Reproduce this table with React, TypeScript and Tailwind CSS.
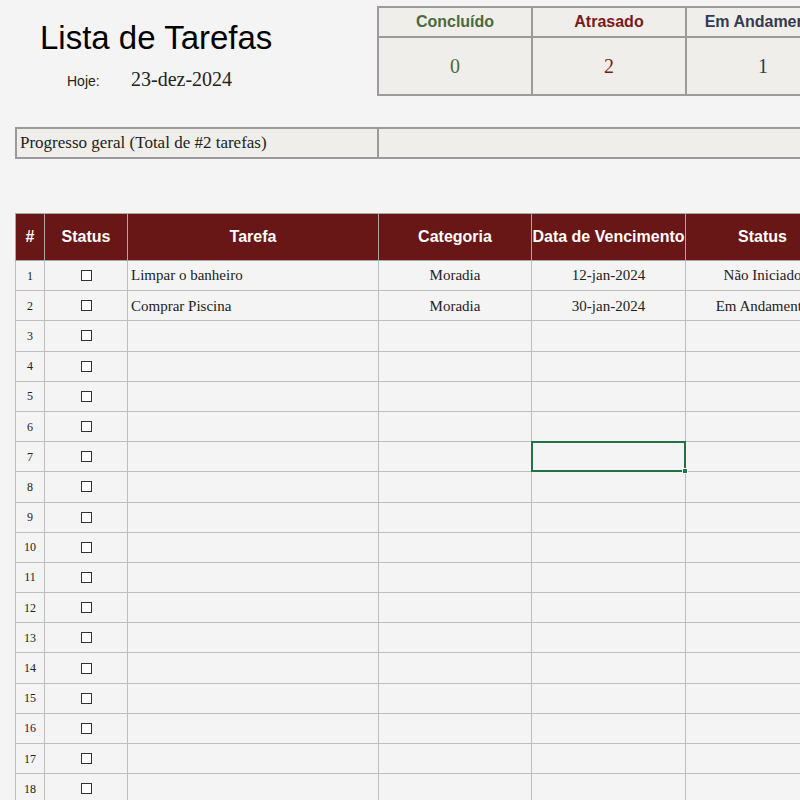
const rows = [
  { n: 1, tarefa: 'Limpar o banheiro', cat: 'Moradia', data: '12-jan-2024', status: 'Não Iniciado' },
  { n: 2, tarefa: 'Comprar Piscina', cat: 'Moradia', data: '30-jan-2024', status: 'Em Andamento' },
  ...Array.from({ length: 16 }, (_, i) => ({ n: i + 3, tarefa: '', cat: '', data: '', status: '' })),
];

const serif = "font-['Liberation_Serif',Georgia,serif]";
const sans = "font-['Liberation_Sans',Arial,sans-serif]";

function Checkbox() {
  return <span className="inline-block w-[11px] h-[11px] border border-[#333] bg-white mt-[3px]" />;
}

export default function App() {
  return (
    <div className="w-[800px] h-[800px] overflow-hidden bg-[#f4f4f4] text-[#222]">
      {/* Top: title + summary */}
      <div className="flex pt-[6px]">
        <div className="w-[377px] shrink-0">
          <h1 className={`${sans} text-[33px] leading-none ml-[40px] mt-[15px] text-black`}>Lista de Tarefas</h1>
          <div className="flex items-baseline ml-[67px] mt-[10px]">
            <span className={`${sans} text-[14px] w-[64px]`}>Hoje:</span>
            <span className={`${serif} text-[20px]`}>23-dez-2024</span>
          </div>
        </div>
        <table className="border-collapse shrink-0 table-fixed w-[462px] bg-[#efeeea]">
          <tbody>
            <tr className="h-[30px]">
              <td className={`${sans} w-[154px] border-2 border-[#9a9a9a] text-center font-bold text-[16px] text-[#4b6a3c]`}>Concluído</td>
              <td className={`${sans} w-[154px] border-2 border-[#9a9a9a] text-center font-bold text-[16px] text-[#7a1b1b]`}>Atrasado</td>
              <td className={`${sans} w-[154px] border-2 border-[#9a9a9a] text-center font-bold text-[16px] text-[#353a52] whitespace-nowrap overflow-hidden`}>Em Andamento</td>
            </tr>
            <tr className="h-[58px]">
              <td className={`${serif} border-2 border-[#9a9a9a] text-center text-[20px] text-[#4b6a3c]`}>0</td>
              <td className={`${serif} border-2 border-[#9a9a9a] text-center text-[20px] text-[#7a1b1b]`}>2</td>
              <td className={`${serif} border-2 border-[#9a9a9a] text-center text-[20px] text-[#353a52]`}>1</td>
            </tr>
          </tbody>
        </table>
      </div>

      {/* Progress */}
      <table className="border-collapse table-fixed ml-[15px] mt-[31px] w-[830px] bg-[#efeeea]">
        <tbody>
          <tr className="h-[30px]">
            <td className={`${serif} w-[362px] border-2 border-[#9a9a9a] px-[3px] text-[17px] text-[#222]`}>Progresso geral (Total de #2 tarefas)</td>
            <td className="border-2 border-[#9a9a9a]"></td>
          </tr>
        </tbody>
      </table>

      {/* Main table */}
      <table className="border-collapse table-fixed ml-[15px] mt-[54px] w-[824px]">
        <thead>
          <tr className={`${sans} h-[47px] bg-[#681616] text-white font-bold text-[16px]`}>
            <th className="w-[29px] border border-[#a8a8a8]">#</th>
            <th className="w-[83px] border border-[#a8a8a8]">Status</th>
            <th className="w-[251px] border border-[#a8a8a8]">Tarefa</th>
            <th className="w-[153px] border border-[#a8a8a8]">Categoria</th>
            <th className="w-[154px] border border-[#a8a8a8] whitespace-nowrap overflow-hidden">Data de Vencimento</th>
            <th className="w-[154px] border border-[#a8a8a8]">Status</th>
          </tr>
        </thead>
        <tbody className={`${serif} text-[15px]`}>
          {rows.map((r) => (
            <tr key={r.n} className="h-[30.2px]">
              <td className="border border-[#bdbdbd] text-center text-[12px]">{r.n}</td>
              <td className="border border-[#bdbdbd] text-center leading-none"><Checkbox /></td>
              <td className="border border-[#bdbdbd] px-[3px]">{r.tarefa}</td>
              <td className="border border-[#bdbdbd] text-center">{r.cat}</td>
              <td className="border border-[#bdbdbd] text-center relative">
                {r.data}
                {r.n === 7 && (
                  <span className="absolute -inset-[1px] border-2 border-[#217346]">
                    <span className="absolute -right-[4px] -bottom-[4px] w-[6px] h-[6px] bg-[#217346] border border-white" />
                  </span>
                )}
              </td>
              <td className="border border-[#bdbdbd] text-center whitespace-nowrap overflow-hidden">{r.status}</td>
            </tr>
          ))}
        </tbody>
      </table>
    </div>
  );
}
